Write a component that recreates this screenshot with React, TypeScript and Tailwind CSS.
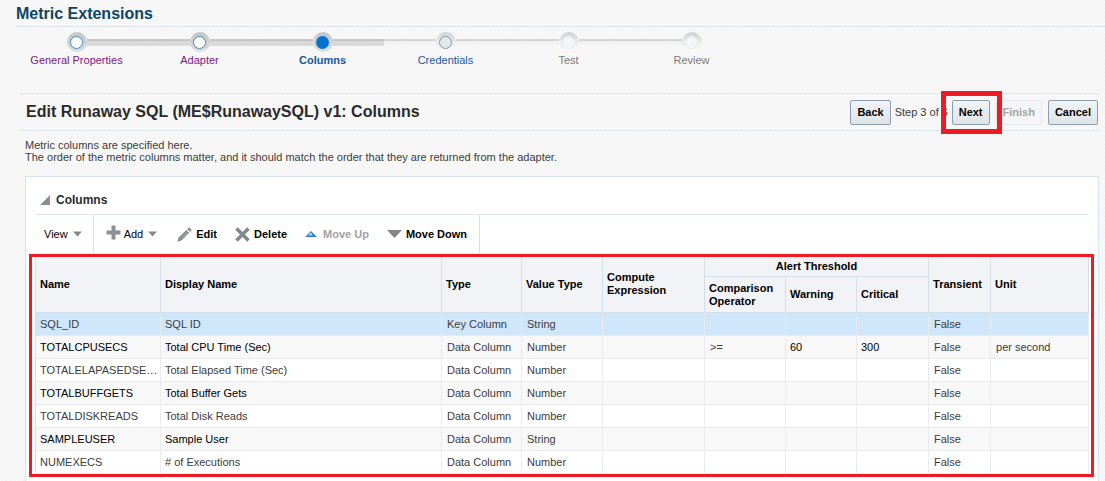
import React from "react";

type StepState = "visited" | "current" | "next" | "future";

const steps: { label: string; state: StepState }[] = [
  { label: "General Properties", state: "visited" },
  { label: "Adapter", state: "visited" },
  { label: "Columns", state: "current" },
  { label: "Credentials", state: "next" },
  { label: "Test", state: "future" },
  { label: "Review", state: "future" },
];

const labelStyle: Record<StepState, string> = {
  visited: "text-[#7b1a7f]",
  current: "font-bold text-[#17599c]",
  next: "text-[#17599c]",
  future: "text-[#7d7d7d]",
};

const ringStyle: Record<StepState, string> = {
  visited: "bg-linear-to-b from-[#c4c4c4] to-[#dedede]",
  current: "bg-linear-to-b from-[#c4c4c4] to-[#dedede]",
  next: "bg-linear-to-b from-[#cdd0d1] via-[#ebecec] to-[#fafafa]",
  future: "bg-linear-to-b from-[#cdd0d1] via-[#ebecec] to-[#fafafa]",
};

const dotStyle: Record<StepState, string> = {
  visited: "border border-[#3a8ad3] bg-white",
  current: "bg-[#0572ce]",
  next: "border border-[#7f98b0] bg-[#e4e8eb]",
  future: "border border-[#e6eaef] bg-[#f3f5f8]",
};

const doneLine = "h-[7px] border-t-2 border-[#c6c6c6] bg-[#d9d9d9]";
const todoLine = "h-[7px] border-t-2 border-[#d3d4d4] bg-linear-to-b from-[#efefef] to-[#f7f7f7]";

function Train() {
  return (
    <nav aria-label="Progress" className="px-[15px] pt-[5px]">
      <ol className="flex">
        {steps.map((s, i) => (
          <li key={s.label} className="w-[123px]">
            <a href={"#step-" + (i + 1)} className="block">
              <span className="flex h-5 items-center">
                <span className={"flex-1 " + (i === 0 ? "" : i < 3 ? doneLine : todoLine)} />
                <span className={"flex size-5 items-center justify-center rounded-full " + ringStyle[s.state]}>
                  <span className={"size-[13px] rounded-full " + dotStyle[s.state]} />
                </span>
                <span className={"flex-1 " + (i === 5 ? "" : i < 3 ? doneLine : todoLine)} />
              </span>
              <span className={"block text-center leading-4 " + labelStyle[s.state]}>{s.label}</span>
            </a>
          </li>
        ))}
      </ol>
    </nav>
  );
}

const buttonBase = "h-[25px] rounded-[2px] border px-[6px] font-bold";
const buttonOn = "border-[#8a9fb3] bg-linear-to-b from-[#f1f3f5] to-[#dfe4e7] text-black";
const buttonOff = "border-[#e3e8ec] bg-[#f5f6f7] text-[#a3a5a7]";

function Caret() {
  return (
    <svg width="9" height="6" viewBox="0 0 9 6" aria-hidden="true">
      <path d="M0 .5h9L4.5 5.500z" fill="#848a8e" />
    </svg>
  );
}

function Toolbar() {
  return (
    <div className="flex h-[39px] border-b border-[#eef0f2] text-black">
      <button className="flex items-center gap-[5px] border-r border-[#d5e0e8] pr-[11px] pl-[9px]">
        View
        <Caret />
      </button>
      <div className="flex items-center border-r border-[#d5e0e8] pr-3 pl-3">
        <button className="flex items-center gap-[3px]">
          <svg width="15" height="15" viewBox="0 0 15 15" className="mb-1" aria-hidden="true">
            <path d="M5.500 .5h4v5h5v4h-5v5h-4v-5h-5v-4h5z" fill="#8b9094" />
          </svg>
          Add
          <span className="pl-[2px]">
            <Caret />
          </span>
        </button>
        <button className="ml-5 flex items-center gap-1 font-bold">
          <svg width="15" height="15" viewBox="0 0 15 15" aria-hidden="true">
            <path d="M.3 14.700 1.600 10.600 9.300 2.900l2.900 2.900L4.500 13.500zM10.200 2 11.500.7q.6-.5 1.200 0l1.700 1.700q.5.6 0 1.200L13.100 4.900z" fill="#8b9094" />
            <path d="M5 11.200 10.200 6" stroke="#a9adb0" strokeWidth="1" />
          </svg>
          Edit
        </button>
        <button className="ml-[18px] flex items-center gap-1 font-bold">
          <svg width="15" height="15" viewBox="0 0 15 15" aria-hidden="true">
            <path d="m1.500 1.500 12 12M13.500 1.500l-12 12" stroke="#85898d" strokeWidth="3.600" />
          </svg>
          Delete
        </button>
        <button disabled className="ml-[18px] flex items-center gap-[6px] font-bold text-[#a0a2a4]">
          <svg width="12" height="8" viewBox="0 0 12 8" aria-hidden="true">
            <path d="M.2 7 6 1l5.800 6z" fill="#2f76cb" />
            <path d="M2.800 5.600 6 2.300l1.800 3.300z" fill="#a5dcfa" />
          </svg>
          Move Up
        </button>
        <button className="ml-[18px] flex items-center gap-1 font-bold">
          <svg width="15" height="8" viewBox="0 0 15 8" aria-hidden="true">
            <path d="M0 0h15L7.500 8z" fill="#80878c" />
          </svg>
          Move Down
        </button>
      </div>
    </div>
  );
}

type Row = {
  name: string;
  display: string;
  type: string;
  value: string;
  op?: string;
  warning?: string;
  critical?: string;
  unit?: string;
};

const rows: Row[] = [
  { name: "SQL_ID", display: "SQL ID", type: "Key Column", value: "String" },
  { name: "TOTALCPUSECS", display: "Total CPU Time (Sec)", type: "Data Column", value: "Number", op: ">=", warning: "60", critical: "300", unit: "per second" },
  { name: "TOTALELAPASEDSE…", display: "Total Elapsed Time (Sec)", type: "Data Column", value: "Number" },
  { name: "TOTALBUFFGETS", display: "Total Buffer Gets", type: "Data Column", value: "Number" },
  { name: "TOTALDISKREADS", display: "Total Disk Reads", type: "Data Column", value: "Number" },
  { name: "SAMPLEUSER", display: "Sample User", type: "Data Column", value: "String" },
  { name: "NUMEXECS", display: "# of Executions", type: "Data Column", value: "Number" },
];

const th = "border-r border-b border-[#d3dfe8] pl-1 text-left font-bold";
const td = "border-r border-b border-[#e9ebed] pl-1 whitespace-nowrap";
const tdInset = "border-r border-b border-[#e9ebed] pl-[5px] whitespace-nowrap";

function ColumnsTable() {
  return (
    <div className="relative mt-[2px]">
      <table className="w-full table-fixed border-separate border-spacing-0 border-l border-[#d3dfe8]">
        <colgroup>
          <col className="w-[125px]" />
          <col className="w-[281px]" />
          <col className="w-20" />
          <col className="w-[81px]" />
          <col className="w-[102px]" />
          <col className="w-[81px]" />
          <col className="w-[71px]" />
          <col className="w-[72px]" />
          <col className="w-[62px]" />
          <col />
        </colgroup>
        <thead className="bg-[#f2f3f7] text-[11px] leading-[13px] text-black">
          <tr className="h-[21px]">
            <th rowSpan={2} className={th}>Name</th>
            <th rowSpan={2} className={th}>Display Name</th>
            <th rowSpan={2} className={th}>Type</th>
            <th rowSpan={2} className={th}>Value Type</th>
            <th rowSpan={2} className={th}>Compute Expression</th>
            <th colSpan={3} className="border-r border-b border-[#d3dfe8] text-center font-bold">Alert Threshold</th>
            <th rowSpan={2} className={th}>Transient</th>
            <th rowSpan={2} className={th}>Unit</th>
          </tr>
          <tr className="h-9">
            <th className={th}>Comparison Operator</th>
            <th className={th}>Warning</th>
            <th className={th}>Critical</th>
          </tr>
        </thead>
        <tbody>
          {rows.map((r, i) => {
            const odd = i % 2 === 1;
            const bg = i === 0 ? "bg-[#d0e7fb]" : odd ? "bg-[#f8f8f8]" : "bg-white";
            const strong = odd ? " text-black" : "";
            return (
              <tr key={r.name} className={"h-[23px] " + bg}>
                <td className={td + strong}>{r.name}</td>
                <td className={td + strong}>{r.display}</td>
                <td className={tdInset}>{r.type}</td>
                <td className={tdInset}>{r.value}</td>
                <td className={td} />
                <td className={tdInset}>{r.op}</td>
                <td className={td + strong}>{r.warning}</td>
                <td className={td + strong}>{r.critical}</td>
                <td className={tdInset}>False</td>
                <td className={tdInset}>{r.unit}</td>
              </tr>
            );
          })}
        </tbody>
      </table>
      <div className="pointer-events-none absolute -top-[2px] -right-[5px] -bottom-[3px] -left-[6px] border-3 border-[#ed1c24]" />
    </div>
  );
}

export default function App() {
  return (
    <div className="flex h-screen flex-col overflow-hidden bg-[#f6f6f6] bg-[repeating-linear-gradient(45deg,#f8f8f8_0px,#f8f8f8_1px,#f4f4f4_2px,#f8f8f8_3px)] font-['Liberation_Sans',Arial,sans-serif] text-[11px] leading-3 text-[#3c3c3c]">
      <header className="ml-4 shrink-0 border-b border-[#d9e3eb] pt-[3px] pb-[2px]">
        <h1 className="text-base leading-[21px] font-bold text-[#0d4564]">Metric Extensions</h1>
      </header>
      <Train />
      <main className="mt-[25px] mr-[6px] ml-5 flex flex-1 flex-col">
        <div className="flex h-[38px] shrink-0 items-center justify-between border-y border-[#dde5ec] pr-px pl-[6px]">
          <h2 className="text-base font-bold text-[#2b2b2b]">Edit Runaway SQL (ME$RunawaySQL) v1: Columns</h2>
          <div className="flex items-center">
            <button className={buttonBase + " " + buttonOn}>Back</button>
            <span className="w-[61px] pl-1 whitespace-nowrap">Step 3 of 6</span>
            <span className="relative">
              <button className={buttonBase + " " + buttonOn}>Next</button>
              <span className="pointer-events-none absolute -top-[9px] -right-[12px] -bottom-[9px] -left-[11px] border-5 border-[#ed1c24]" />
            </span>
            <button disabled className={"ml-[6px] " + buttonBase + " " + buttonOff}>Finish</button>
            <button className={"ml-[6px] " + buttonBase + " " + buttonOn}>Cancel</button>
          </div>
        </div>
        <p className="pt-2 pl-[5px]">
          Metric columns are specified here.
          <br />
          The order of the metric columns matter, and it should match the order that they are returned from the adapter.
        </p>
        <section className="mt-[13px] ml-[5px] flex flex-1 flex-col border-x border-t border-[#d6e2ea] bg-white px-[9px]">
          <h3 className="flex h-[38px] items-center gap-[6px] border-b border-[#dfe7ed] pt-2 pl-[5px] text-xs font-bold text-[#2b2b2b]">
            <svg width="10" height="10" viewBox="0 0 10 10" aria-hidden="true">
              <path d="M10 0v10H0z" fill="#8b9094" />
            </svg>
            Columns
          </h3>
          <Toolbar />
          <ColumnsTable />
        </section>
      </main>
    </div>
  );
}
